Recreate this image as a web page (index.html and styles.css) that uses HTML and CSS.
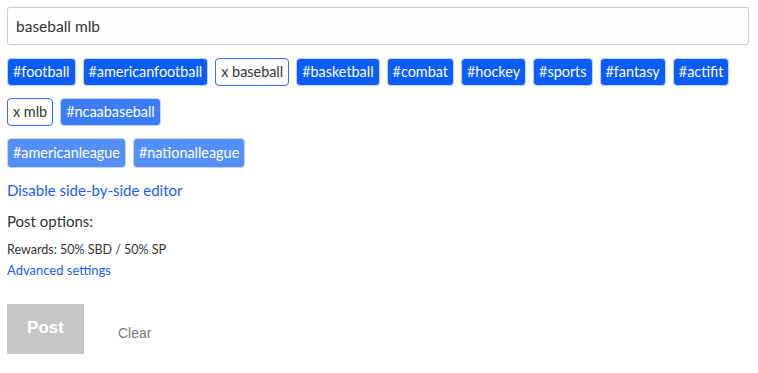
FILE: index.html
```html
<!DOCTYPE html>
<html lang="en">
<head>
  <meta charset="UTF-8" />
  <title>Post editor</title>
  <link rel="stylesheet" href="styles.css">
</head>
<body>
  <div class="editor">
    <input class="tags-input" type="text" value="baseball mlb" />

    <div class="tag-list first">
      <span class="tag">#football</span>
      <span class="tag">#americanfootball</span>
      <span class="tag selected">x baseball</span>
      <span class="tag">#basketball</span>
      <span class="tag">#combat</span>
      <span class="tag">#hockey</span>
      <span class="tag">#sports</span>
      <span class="tag">#fantasy</span>
      <span class="tag">#actifit</span>
      <span class="tag selected">x mlb</span>
      <span class="tag mid">#ncaabaseball</span>
    </div>

    <div class="tag-list">
      <span class="tag light">#americanleague</span>
      <span class="tag light">#nationalleague</span>
    </div>

    <a class="toggle-link" href="#">Disable side-by-side editor</a>

    <div class="post-options">
      <div class="options-title">Post options:</div>
      <div class="rewards">Rewards: 50% SBD / 50% SP</div>
      <a class="advanced" href="#">Advanced settings</a>
    </div>

    <div class="actions">
      <button class="post-btn" disabled>Post</button>
      <button class="clear-btn">Clear</button>
    </div>
  </div>
</body>
</html>
```

FILE: styles.css
```css
html, body {
  margin: 0;
  padding: 0;
  background: #fff;
}

body {
  font-family: "Lato", "Source Sans Pro", sans-serif;
  color: #333;
}

.editor {
  padding: 7px 9px 0 7px;
}

.tags-input {
  display: block;
  box-sizing: border-box;
  width: 100%;
  height: 38px;
  padding: 0 8px;
  border: 1px solid #cacaca;
  border-radius: 3px;
  background: #fefefe;
  font-family: inherit;
  font-size: 15.5px;
  color: #333;
  outline: none;
}

.tag-list {
  display: flex;
  flex-wrap: wrap;
  gap: 12px 7px;
  margin-top: 12px;
}

.tag-list.first {
  margin-top: 13px;
}

.tag {
  box-sizing: border-box;
  height: 28px;
  line-height: 26px;
  padding: 0 5px;
  border: 1px solid #c7d3ea;
  border-radius: 4px;
  background: #0a5cff;
  color: #fff;
  font-size: 14.4px;
}

.tag.selected {
  background: #fff;
  color: #333;
  border-color: #2e6cf3;
}

.tag.mid {
  background: #3a7cfa;
}

.tag.light {
  background: #5590fa;
  height: 30px;
  line-height: 28px;
}

.toggle-link {
  display: block;
  margin-top: 13px;
  color: #1a5cff;
  font-size: 15px;
  text-decoration: none;
}

.post-options {
  margin-top: 13px;
}

.options-title {
  font-size: 15px;
  margin-bottom: 12px;
}

.rewards {
  font-size: 12.5px;
}

.advanced {
  display: block;
  margin-top: 5px;
  font-size: 13px;
  color: #1a5cff;
  text-decoration: none;
}

.actions {
  display: flex;
  align-items: center;
  margin-top: 26px;
}

.post-btn {
  width: 77px;
  height: 50px;
  border: none;
  background: #c6c6c6;
  color: #fff;
  font-family: "Liberation Sans", Arial, sans-serif;
  font-weight: bold;
  font-size: 17px;
  padding-bottom: 4px;
}

.clear-btn {
  margin-left: 28px;
  margin-top: 8px;
  border: none;
  background: none;
  color: #7a7a7a;
  font-family: "Liberation Sans", Arial, sans-serif;
  font-size: 14px;
}
```
